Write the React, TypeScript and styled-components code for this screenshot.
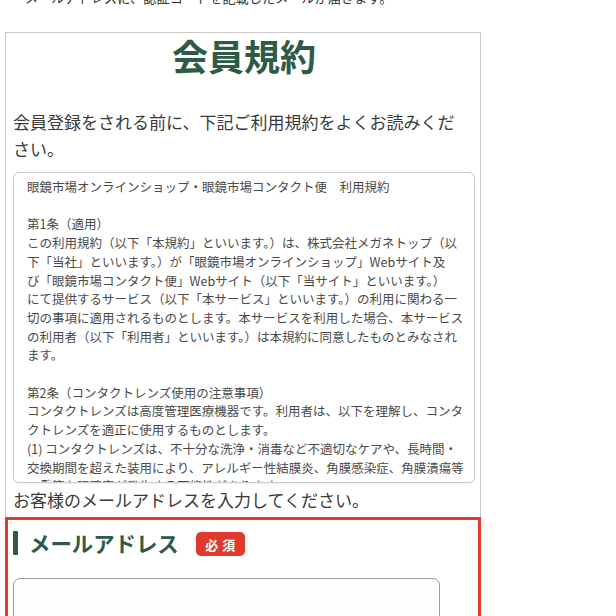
import * as React from 'react'
import styled, { createGlobalStyle } from 'styled-components'

const GlobalStyle = createGlobalStyle`
  html, body {
    margin: 0;
    padding: 0;
    background: #ffffff;
  }
  body {
    font-family: "Noto Sans CJK JP", "Noto Sans", sans-serif;
    color: #333333;
    overflow: hidden;
  }
`

const green = '#2d5b45'
const red = '#e0392d'

const termsText = `眼鏡市場オンラインショップ・眼鏡市場コンタクト便　利用規約

第1条（適用）
この利用規約（以下「本規約」といいます。）は、株式会社メガネトップ（以
下「当社」といいます。）が「眼鏡市場オンラインショップ」Webサイト及
び「眼鏡市場コンタクト便」Webサイト（以下「当サイト」といいます。）
にて提供するサービス（以下「本サービス」といいます。）の利用に関わる一
切の事項に適用されるものとします。本サービスを利用した場合、本サービス
の利用者（以下「利用者」といいます。）は本規約に同意したものとみなされ
ます。

第2条（コンタクトレンズ使用の注意事項）
コンタクトレンズは高度管理医療機器です。利用者は、以下を理解し、コンタ
クトレンズを適正に使用するものとします。
(1) コンタクトレンズは、不十分な洗浄・消毒など不適切なケアや、長時間・
交換期間を超えた装用により、アレルギー性結膜炎、角膜感染症、角膜潰瘍等
の重篤な眼障害が発生する可能性があります。`

const Page = styled.div`
  width: 616px;
  height: 616px;
  overflow: hidden;
`

const Lead = styled.p`
  margin: -9px 0 27px;
  padding-left: 25px;
  font-size: 13.2px;
  line-height: 14px;
  color: #333333;
  white-space: nowrap;
`

const Frame = styled.div`
  margin-left: 5px;
  width: 476px;
  box-sizing: border-box;
  border: 1px solid #c9c9c9;
  border-bottom: none;
`

const Upper = styled.div`
  padding: 0 5px 0 7px;
`

const Title = styled.h1`
  margin: 0;
  font-size: 36px;
  line-height: 44px;
  font-weight: 700;
  text-align: center;
  color: ${green};
`

const Intro = styled.p`
  margin: 31px 0 0;
  max-width: 452px;
  font-size: 17px;
  line-height: 27px;
  color: #3a3a3a;
`

const TermsBox = styled.div`
  margin-top: 10px;
  height: 311px;
  box-sizing: border-box;
  border: 1px solid #cccccc;
  border-radius: 6px;
  padding: 5px 8px 0 13px;
  overflow: hidden;
  background: #ffffff;
  box-shadow: 0 1px 2px rgba(0, 0, 0, 0.06);
`

const TermsText = styled.div`
  font-size: 12.5px;
  line-height: 18.7px;
  color: #4a4a4a;
  white-space: pre;
`

const Prompt = styled.p`
  margin: 5px 0 0;
  font-size: 17px;
  line-height: 24px;
  color: #3a3a3a;
`

const Highlight = styled.div`
  margin: 5px -1px 0;
  height: 140px;
  border: 3px solid ${red};
  border-bottom: none;
  padding: 10px 0 0 5px;
`

const FieldHead = styled.div`
  display: flex;
  align-items: center;
`

const Bar = styled.span`
  width: 5px;
  height: 24px;
  background: ${green};
  border-radius: 1px;
`

const FieldLabel = styled.span`
  margin-left: 11px;
  font-size: 21.4px;
  line-height: 24px;
  font-weight: 700;
  color: ${green};
`

const Badge = styled.span`
  margin-left: 17px;
  margin-top: 2px;
  width: 49px;
  height: 24px;
  display: flex;
  align-items: center;
  justify-content: center;
  border-radius: 5px;
  background: ${red};
  color: #ffffff;
  font-size: 13px;
  font-weight: 700;
  letter-spacing: 4px;
  padding-left: 4px;
  box-sizing: border-box;
`

const Input = styled.input`
  display: block;
  margin-top: 22px;
  width: 427px;
  height: 70px;
  box-sizing: border-box;
  border: 1.5px solid #9b9b9b;
  border-radius: 7px;
  background: #fdfdfd;
  outline: none;
`

export default function App() {
  return (
    <Page>
      <GlobalStyle />
      <Lead>メールアドレスに、認証コードを記載したメールが届きます。</Lead>
      <Frame>
        <Upper>
          <Title>会員規約</Title>
          <Intro>会員登録をされる前に、下記ご利用規約をよくお読みください。</Intro>
          <TermsBox>
            <TermsText>{termsText}</TermsText>
          </TermsBox>
          <Prompt>お客様のメールアドレスを入力してください。</Prompt>
        </Upper>
        <Highlight>
          <FieldHead>
            <Bar />
            <FieldLabel>メールアドレス</FieldLabel>
            <Badge>必須</Badge>
          </FieldHead>
          <Input type="email" />
        </Highlight>
      </Frame>
    </Page>
  )
}
